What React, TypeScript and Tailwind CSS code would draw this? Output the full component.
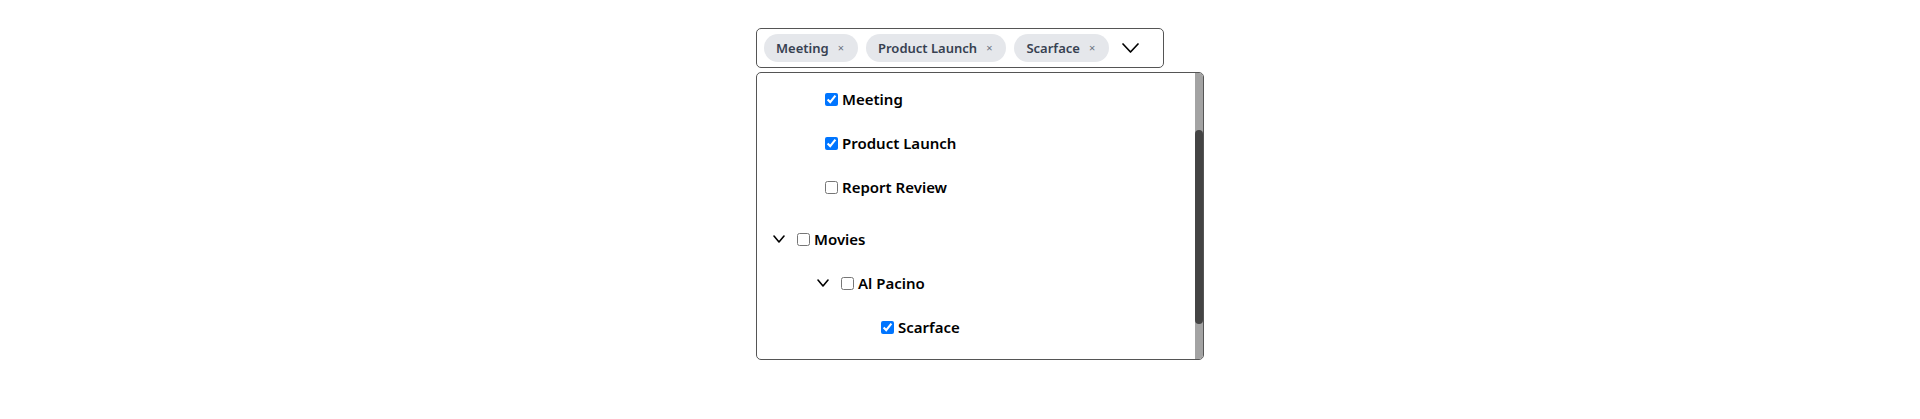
import type { FC } from "react";

type TreeRow = {
  label: string;
  checked: boolean;
  indent: string;
  expandable?: boolean;
  spaced?: boolean;
};

const chips = ["Meeting", "Product Launch", "Scarface"];

// visible slice of the tree (list is scrolled a bit)
const rows: TreeRow[] = [
  { label: "Meeting", checked: true, indent: "pl-[68px]" },
  { label: "Product Launch", checked: true, indent: "pl-[68px]" },
  { label: "Report Review", checked: false, indent: "pl-[68px]" },
  { label: "Movies", checked: false, indent: "pl-[16px]", expandable: true, spaced: true },
  { label: "Al Pacino", checked: false, indent: "pl-[60px]", expandable: true },
  { label: "Scarface", checked: true, indent: "pl-[124px]" },
];

const ChevronDown: FC<{ className?: string; width: number; height: number; stroke?: number }> = ({
  className,
  width,
  height,
  stroke = 2,
}) => (
  <svg className={className} width={width} height={height} viewBox={`0 0 ${width} ${height}`} fill="none">
    <polyline
      points={`1,1 ${width / 2},${height - 1} ${width - 1},1`}
      stroke="#000"
      strokeWidth={stroke}
      strokeLinecap="round"
      strokeLinejoin="round"
    />
  </svg>
);

export default function App() {
  return (
    <div
      className="flex h-[419px] w-full flex-col items-center bg-white pt-[28px]"
      style={{ fontFamily: '"Noto Sans", "Open Sans", sans-serif' }}
    >
      <div className="w-[408px]">
        {/* trigger */}
        <div className="flex h-[40px] w-[408px] items-center rounded-[5px] border border-[#555] pl-[7px]">
          <div className="flex items-center gap-2">
            {chips.map((c) => (
              <span
                key={c}
                className="flex h-[28px] items-center rounded-full bg-[#e5e7eb] pl-3 pr-[14px] pt-px text-[13px] font-semibold text-[#374151]"
              >
                {c}
                <span className="ml-[9px] text-[11px] font-normal text-[#6b7280]">×</span>
              </span>
            ))}
          </div>
          <ChevronDown className="ml-[13px]" width={17} height={10} stroke={1.7} />
        </div>

        {/* dropdown */}
        <div className="mt-1 flex h-[288px] w-[448px] rounded-[5px] border border-[#555] bg-white">
          <div className="flex flex-1 flex-col pt-[4px]">
            {rows.map((r) => (
              <div
                key={r.label}
                className={`flex h-[44px] items-center ${r.indent} ${r.spaced ? "mt-[8px]" : ""}`}
              >
                {r.expandable && <ChevronDown className="mr-[12px]" width={12} height={8} stroke={1.6} />}
                <input type="checkbox" defaultChecked={r.checked} className="m-0 h-[13px] w-[13px]" />
                <span className="ml-[4px] text-[15px] font-semibold text-black">{r.label}</span>
              </div>
            ))}
          </div>
          {/* scrollbar */}
          <div className="flex w-[8px] flex-col rounded-tr-[4px] rounded-br-[4px] bg-[#a3a3a3] pt-[57px]">
            <div className="h-[194px] w-[8px] rounded-full bg-[#444]" />
          </div>
        </div>
      </div>
    </div>
  );
}
